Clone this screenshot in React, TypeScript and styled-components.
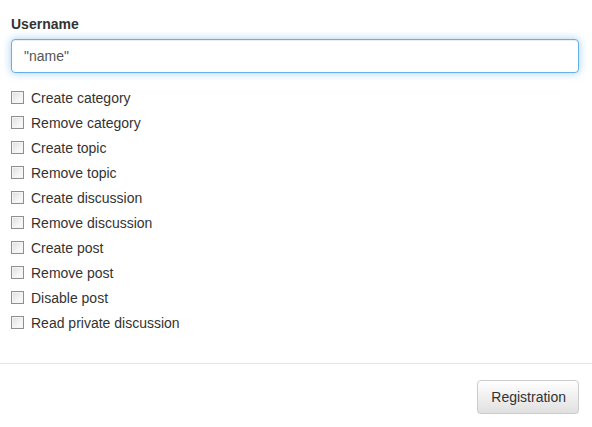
import React from "react";
import styled, { createGlobalStyle } from "styled-components";

const Global = createGlobalStyle`
  html, body { margin: 0; padding: 0; background: #fff; }
  body { font-family: "Liberation Sans", Arial, sans-serif; font-size: 14px; color: #333; }
`;

const Body = styled.div`
  padding: 14px 13px 0 11px;
`;

const Label = styled.label`
  display: block;
  font-weight: bold;
  line-height: 20px;
  margin-bottom: 5px;
  color: #333;
`;

const Input = styled.input`
  display: block;
  box-sizing: border-box;
  width: 100%;
  height: 34px;
  padding: 6px 12px;
  font-family: "Liberation Sans", Arial, sans-serif;
  font-size: 14px;
  color: #555;
  background: #fff;
  border: 1px solid #66afe9;
  border-radius: 4px;
  outline: 0;
  box-shadow: inset 0 1px 1px rgba(0, 0, 0, 0.075), 0 0 8px rgba(102, 175, 233, 0.6);
  caret-color: #000;
`;

const List = styled.div`
  margin-top: 12px;
  display: flex;
  flex-direction: column;
`;

const Row = styled.label`
  display: flex;
  align-items: center;
  height: 25px;
  gap: 7px;
  color: #333;
  line-height: 20px;
`;

const Box = styled.span`
  box-sizing: border-box;
  width: 13px;
  height: 13px;
  border: 1px solid #8f8f8f;
  background: linear-gradient(135deg, #dcdcdc 0%, #f4f4f4 60%, #fbfbfb 100%);
  box-shadow: inset 0 0 0 1px #f4f4f4;
  flex: none;
`;

const Divider = styled.div`
  margin-top: 28px;
  border-top: 1px solid #e5e5e5;
`;

const Footer = styled.div`
  display: flex;
  justify-content: flex-end;
  padding: 16px 13px 0 11px;
`;

const Button = styled.button`
  box-sizing: border-box;
  height: 34px;
  padding: 6px 12px 6px 13px;
  font-family: "Liberation Sans", Arial, sans-serif;
  font-size: 14px;
  color: #333;
  border: 1px solid #ccc;
  border-radius: 4px;
  background: linear-gradient(to bottom, #ffffff 0%, #e0e0e0 100%);
  box-shadow: inset 0 1px 0 rgba(255, 255, 255, 0.15), 0 1px 1px rgba(0, 0, 0, 0.075);
  cursor: pointer;
`;

const items = [
  "Create category",
  "Remove category",
  "Create topic",
  "Remove topic",
  "Create discussion",
  "Remove discussion",
  "Create post",
  "Remove post",
  "Disable post",
  "Read private discussion",
];

export default function App() {
  return (
    <>
      <Global />
      <Body>
        <Label>Username</Label>
        <Input defaultValue={'"name"'} autoFocus />
        <List>
          {items.map((t) => (
            <Row key={t}>
              <Box />
              {t}
            </Row>
          ))}
        </List>
      </Body>
      <Divider />
      <Footer>
        <Button>Registration</Button>
      </Footer>
    </>
  );
}
